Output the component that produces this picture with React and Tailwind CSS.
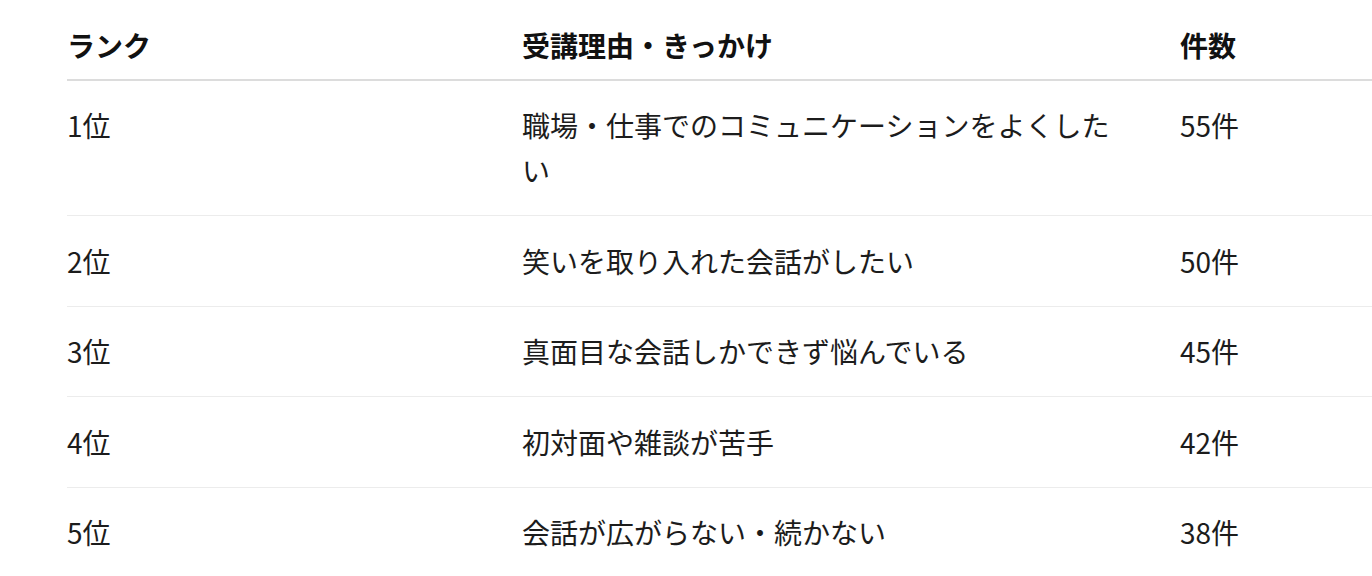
import React from 'react';

const rows = [
  { rank: '1位', reason: '職場・仕事でのコミュニケーションをよくしたい', count: '55件' },
  { rank: '2位', reason: '笑いを取り入れた会話がしたい', count: '50件' },
  { rank: '3位', reason: '真面目な会話しかできず悩んでいる', count: '45件' },
  { rank: '4位', reason: '初対面や雑談が苦手', count: '42件' },
  { rank: '5位', reason: '会話が広がらない・続かない', count: '38件' },
];

export default function App() {
  return (
    <div
      className="min-h-screen bg-white overflow-hidden pl-[67px] text-[28px] leading-[44.8px] text-[#1c1c1c]"
      style={{ fontFamily: '"Noto Sans CJK JP", "Noto Sans", sans-serif' }}
    >
      <div className="w-[1400px]">
        {/* Header */}
        <div className="grid grid-cols-[455px_658px_1fr] border-b-2 border-[#dcdcdc] pt-[23px] pb-[11px] font-bold text-[#111]">
          <div>ランク</div>
          <div>受講理由・きっかけ</div>
          <div>件数</div>
        </div>

        {/* Rows */}
        {rows.map((row) => (
          <div
            key={row.rank}
            className="grid grid-cols-[455px_658px_1fr] border-b border-[#ececec] py-[22.4px]"
          >
            <div>{row.rank}</div>
            <div className="pr-[48px]">{row.reason}</div>
            <div>{row.count}</div>
          </div>
        ))}
      </div>
    </div>
  );
}
